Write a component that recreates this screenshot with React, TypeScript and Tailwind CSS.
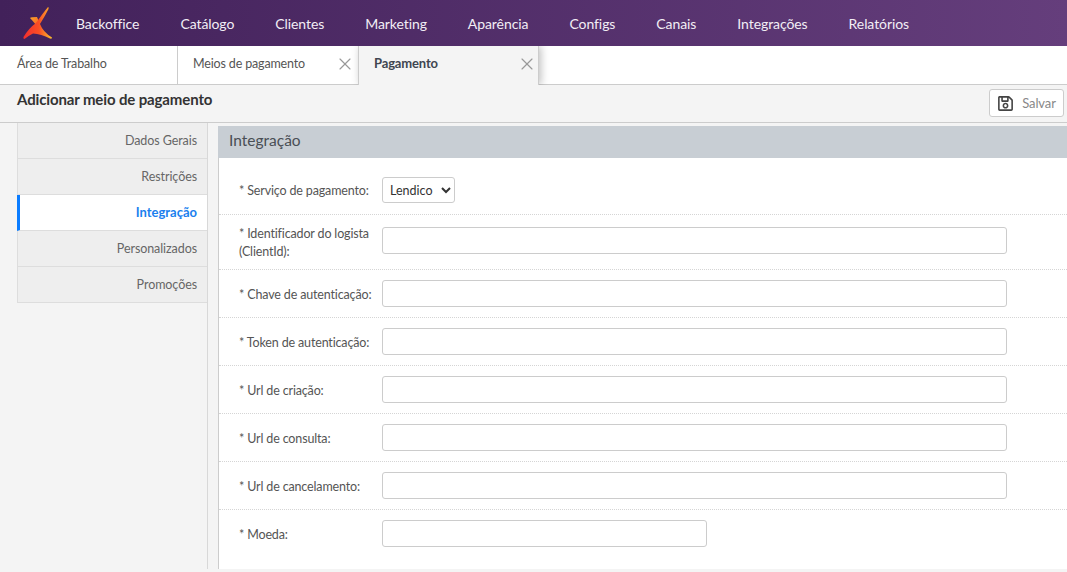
import { X } from "lucide-react";
import { FaRegSave } from "react-icons/fa";

const MENU = ["Backoffice", "Catálogo", "Clientes", "Marketing", "Aparência", "Configs", "Canais", "Integrações", "Relatórios"];
const SIDE = ["Dados Gerais", "Restrições", "Integração", "Personalizados", "Promoções"];

function Logo() {
  return (
    <svg width="30" height="34" viewBox="0 0 30 34" className="shrink-0">
      <defs>
        <linearGradient id="lg" x1="0" y1="0.9" x2="1" y2="0.9">
          <stop offset="0" stopColor="#f22d2e" />
          <stop offset="0.55" stopColor="#fb4f24" />
          <stop offset="1" stopColor="#f9c02c" />
        </linearGradient>
        <linearGradient id="lt" x1="0" y1="0" x2="1" y2="1">
          <stop offset="0" stopColor="#f9a52a" />
          <stop offset="1" stopColor="#fb5a22" />
        </linearGradient>
      </defs>
      <path d="M7 12 Q8 11 14 11 L17 18 L13 19 Q10 15 7 12 Z" fill="url(#lt)" />
      <path d="M25 1 Q26 1 25.5 3 Q22 10 17 18 Q20 26 29 31.5 Q29 33 27 32.6 Q18 28 10 27.5 Q5 30 1.5 33 Q0 33 0.5 31 Q6 22 13 17 Q20 7 25 1 Z" fill="url(#lg)" />
    </svg>
  );
}

function Row({ label, children, className }: { label: React.ReactNode; children: React.ReactNode; className: string }) {
  return (
    <div className={`flex items-center border-b border-dotted border-[#d5d5d5] pl-[20px] ${className}`}>
      <label className="w-[143px] shrink-0 pt-[2px] text-[12.5px] leading-[18px] tracking-[-0.15px] text-[#555]">{label}</label>
      {children}
    </div>
  );
}

const inputCls = "h-[27px] w-[625px] rounded-[3px] border border-[#ccc] bg-white";

export default function App() {
  return (
    <div className="flex h-[572px] w-[1067px] flex-col overflow-hidden bg-[#f4f4f4] font-['Lato','Noto_Sans',sans-serif] text-[#555]">
      <header className="relative z-20 flex h-[46px] shrink-0 items-center bg-gradient-to-r from-[#42215a] to-[#653e7c] pl-[23px]">
        <Logo />
        <nav className="ml-[23px] flex gap-[41px]">
          {MENU.map((m) => (
            <a key={m} className="text-[14px] tracking-[-0.08px] text-[#f2eef5]">{m}</a>
          ))}
        </nav>
      </header>

      <div className="flex h-[39px] shrink-0 border-b border-[#ccc] bg-white text-[12.5px] tracking-[-0.15px]">
        <div className="flex w-[178px] items-center border-r border-[#ccc] pl-[17px] pb-[2px]">Área de Trabalho</div>
        <div className="flex w-[180px] items-center justify-between pl-[15px] pr-[3px] pb-[2px]">
          Meios de pagamento
          <X size={20} strokeWidth={1.4} className="text-[#999]" />
        </div>
        <div className="relative z-10 flex h-[39px] w-[181px] items-center justify-between border-x border-[#ccc] bg-[#f4f4f4] pl-[15px] pr-[1px] pb-[3px] text-[13px] font-bold text-[#3f4650] shadow-[2px_0_8px_rgba(0,0,0,0.25)]">
          Pagamento
          <X size={20} strokeWidth={1.4} className="text-[#999]" />
        </div>
      </div>

      <div className="relative z-20 flex h-[38px] shrink-0 items-start justify-between border-b border-[#ccc] bg-[#f4f4f4] pl-[17px] pr-[3px]">
        <h1 className="mt-[3px] text-[15px] font-bold tracking-[-0.13px] text-[#333]">Adicionar meio de pagamento</h1>
        <button className="mt-[4px] flex h-[28px] w-[75px] items-center justify-center gap-[8px] rounded-[3px] border border-[#ccc] bg-white pt-[1px] text-[13px] tracking-[-0.1px] text-[#888]">
          <FaRegSave size={17} className="text-[#444]" />
          Salvar
        </button>
      </div>

      <div className="flex h-[446px] shrink-0 pl-[17px]">
        <aside className="w-[191px] shrink-0 border-r border-[#d8d8d8]">
          <ul className="border-l border-[#ddd]">
            {SIDE.map((s) =>
              s === "Integração" ? (
                <li key={s} className="-ml-px flex h-[36px] items-center justify-end border-b border-l-[3px] border-[#ddd] border-l-[#0a7cff] bg-white pr-[10px] text-[13px] font-bold text-[#1a7fee]">
                  {s}
                </li>
              ) : (
                <li key={s} className="flex h-[36px] items-center justify-end border-b border-[#ddd] bg-[#eee] pr-[10px] pt-[2px] text-[12.5px] tracking-[-0.08px] text-[#666]">
                  {s}
                </li>
              )
            )}
          </ul>
        </aside>

        <main className="ml-[10px] mt-[3px] flex-1 border-l border-[#ccc] bg-white">
          <div className="-ml-px flex h-[32px] items-center bg-[#c8ced4] pl-[11px] pb-[2px] text-[15.5px] text-[#4a4f55]">Integração</div>
          <Row label="* Serviço de pagamento:" className="h-[57px] pt-[8px]">
            <select defaultValue="Lendico" className="h-[26px] w-[73px] rounded-[3px] border border-[#ccc] bg-white pl-[3px] text-[12.5px] text-[#333]">
              <option>Lendico</option>
            </select>
          </Row>
          <Row label={<>* Identificador do logista<br />(ClientId):</>} className="h-[55px]">
            <input className={`${inputCls} mb-[3px]`} />
          </Row>
          <Row label="* Chave de autenticação:" className="h-[48px]">
            <input className={inputCls} />
          </Row>
          <Row label="* Token de autenticação:" className="h-[48px]">
            <input className={inputCls} />
          </Row>
          <Row label="* Url de criação:" className="h-[48px]">
            <input className={inputCls} />
          </Row>
          <Row label="* Url de consulta:" className="h-[48px]">
            <input className={inputCls} />
          </Row>
          <Row label="* Url de cancelamento:" className="h-[48px]">
            <input className={inputCls} />
          </Row>
          <div className="flex h-[47px] items-center pl-[20px]">
            <label className="w-[143px] shrink-0 pt-[3px] text-[12.5px] tracking-[-0.15px] text-[#555]">* Moeda:</label>
            <input className="h-[27px] w-[325px] rounded-[3px] border border-[#ccc] bg-white" />
          </div>
        </main>
      </div>
    </div>
  );
}
